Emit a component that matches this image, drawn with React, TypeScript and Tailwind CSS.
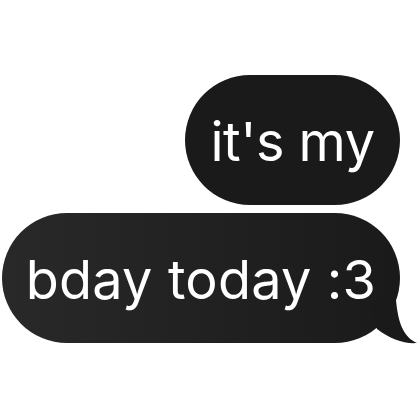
import React from 'react';

const Tail = () => (
  <svg
    className="absolute right-[-20px] bottom-[-3px]"
    width="60"
    height="56"
    viewBox="0 0 60 56"
  >
    <path d="M10 10 L36 10 C38 32 43 47 57 53 C44 54 30 49 17 39 Z" fill="#1a1a1a" />
  </svg>
);

export default function App() {
  return (
    <div className="w-[420px] h-[420px] bg-white flex flex-col items-end gap-[8px] pt-[75px] pr-[20px] font-['Inter',sans-serif]">
      <div className="w-[215px] h-[130px] rounded-full bg-[#1a1a1a] text-white text-[54px] flex items-center justify-center tracking-[-0.5px] pt-[2px]">
        it's my
      </div>
      <div className="relative w-[398px] h-[130px] rounded-full bg-gradient-to-r from-[#292929] to-[#1a1a1a] text-white text-[54px] flex items-center justify-center tracking-[0.2px] pt-[2px]">
        bday today :3
        <Tail />
      </div>
    </div>
  );
}
